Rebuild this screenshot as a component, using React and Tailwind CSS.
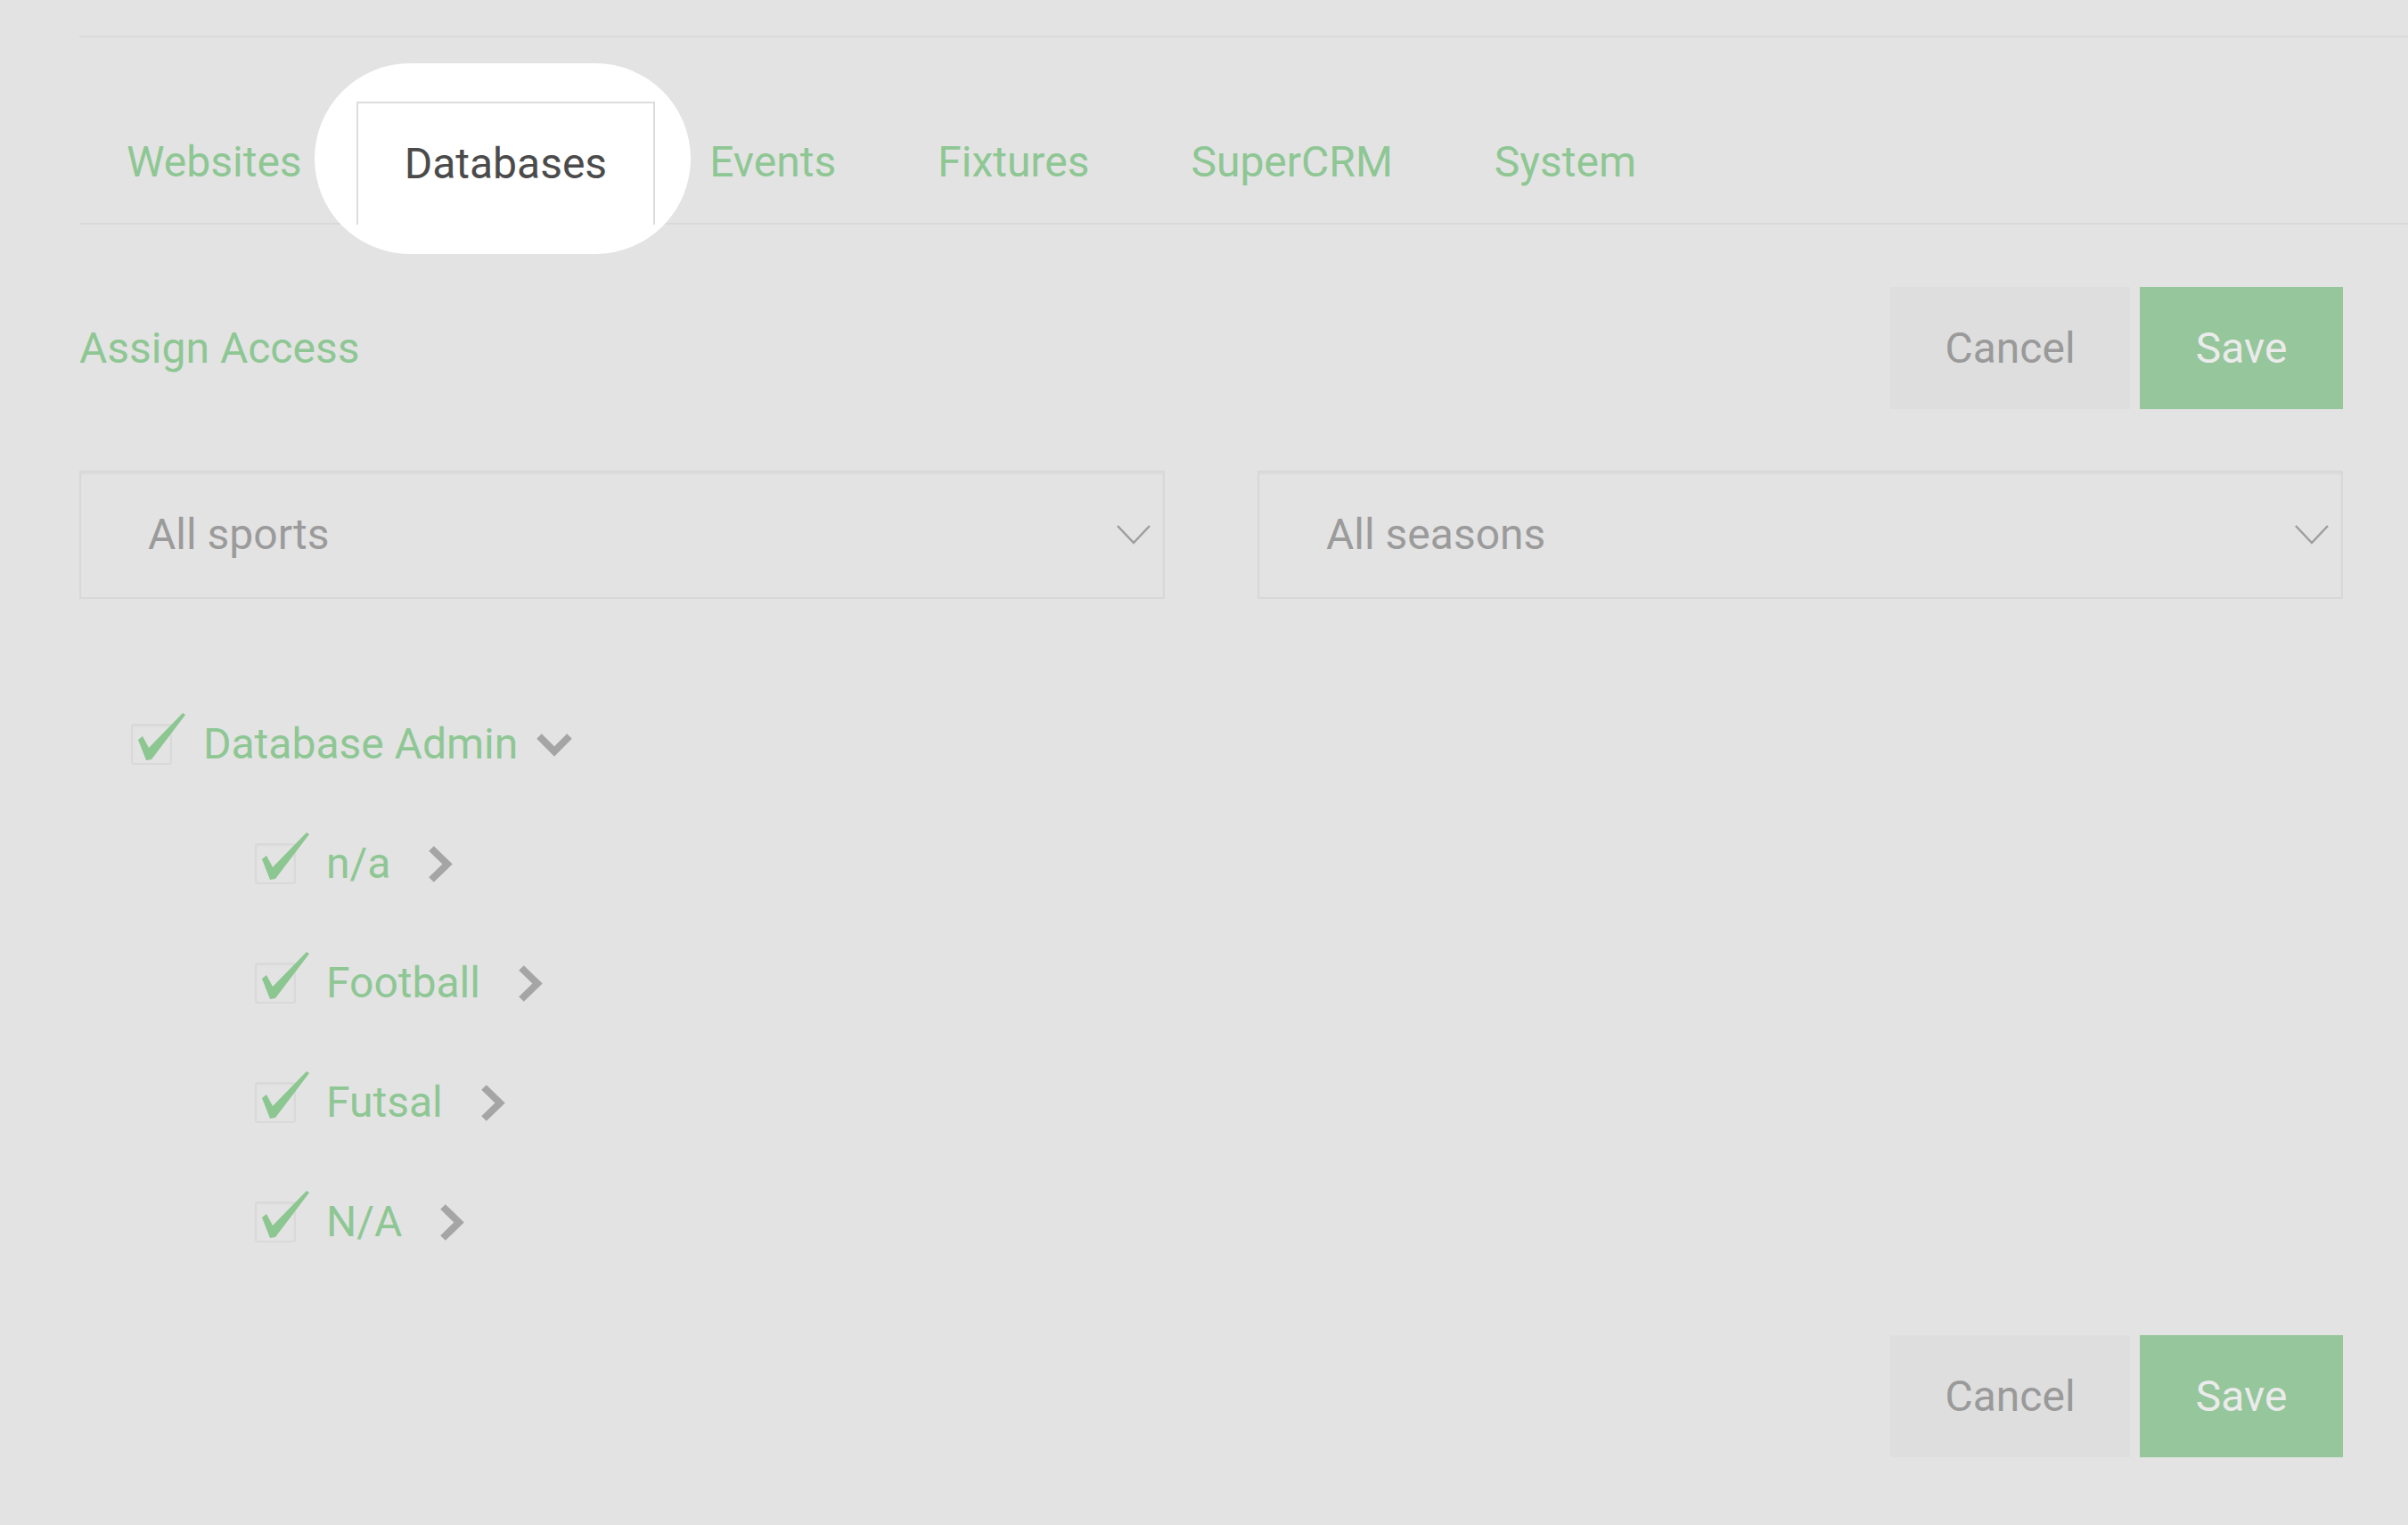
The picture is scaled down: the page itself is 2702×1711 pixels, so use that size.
import React, { useState } from 'react';

const tabs = ['Websites', 'Databases', 'Events', 'Fixtures', 'SuperCRM', 'System'];
const sports = ['n/a', 'Football', 'Futsal', 'N/A'];

const CheckBox = () => (
  <div className="relative w-[46px] h-[46px] shrink-0 border-2 border-[#d9d9d9] rounded-[3px] shadow-[inset_0_1px_2px_rgba(0,0,0,0.04)]">
    <svg className="absolute left-[4px] top-[-15px]" width="56" height="56" viewBox="0 0 56 56">
      <path d="M2 31 L7 27 L14 40 L52 1 L55 3 L17 53 L11 54 Z" fill="#8cc690" />
    </svg>
  </div>
);

const ChevronDown = () => (
  <svg width="42" height="28" viewBox="0 0 42 28">
    <polyline points="4,5 21,22 38,5" fill="none" stroke="#a5a5a5" strokeWidth="8" />
  </svg>
);

const ChevronRight = () => (
  <svg width="29" height="43" viewBox="0 0 29 43">
    <polyline points="5,4 23,21.5 5,39" fill="none" stroke="#a5a5a5" strokeWidth="8" />
  </svg>
);

const SelectBox = ({ label }) => (
  <div className="h-[144px] flex items-center justify-between border-2 border-[#d8d8d8] shadow-[inset_0_2px_2px_rgba(0,0,0,0.04)] pl-[75px] pr-[14px]">
    <span className="text-[48px] text-[#9b9b9b]">{label}</span>
    <svg width="38" height="22" viewBox="0 0 38 22">
      <polyline points="1,1 19,20 37,1" fill="none" stroke="#9e9e9e" strokeWidth="2.5" />
    </svg>
  </div>
);

const Actions = ({ className }) => (
  <div className={`flex gap-[11px] ${className}`}>
    <button className="w-[269px] h-[137px] bg-[#dedede] text-[48px] text-[#9a9a9a]">Cancel</button>
    <button className="w-[228px] h-[137px] bg-[#96c69b] text-[48px] text-[#ebebeb]">Save</button>
  </div>
);

export default function App() {
  const [active, setActive] = useState('Databases');

  return (
    <div className="min-h-[1711px] bg-[#e3e3e3] font-[family-name:Roboto,sans-serif] pl-[89px] pt-[40px]">
      <div className="border-t-2 border-[#dadada]">
        {/* tab strip */}
        <div className="relative mt-[72px] flex gap-[8px] border-b-2 border-[#d9d9d9]">
          <div className="absolute left-[264px] top-[-43px] w-[422px] h-[214px] rounded-full bg-white" />
          {tabs.map((t) =>
            t === active ? (
              <div
                key={t}
                className="relative z-10 h-[138px] -mb-[2px] px-[52px] flex items-center bg-white border-2 border-b-0 border-[#dcdcdc] text-[48px] text-[#4b4b4b]"
              >
                {t}
              </div>
            ) : (
              <button
                key={t}
                onClick={() => setActive(t)}
                className="relative z-10 h-[136px] px-[53px] flex items-center text-[48px] text-[#8ec794]"
              >
                {t}
              </button>
            )
          )}
        </div>

        <div className="pr-[73px]">
          <div className="mt-[70px] flex items-center justify-between">
            <h3 className="text-[48px] text-[#8ec794] leading-none">Assign Access</h3>
            <Actions />
          </div>

          <div className="mt-[69px] grid grid-cols-2 gap-[104px]">
            <SelectBox label="All sports" />
            <SelectBox label="All seasons" />
          </div>

          {/* access tree */}
          <div className="mt-[96px] pl-[58px]">
            <div className="h-[134px] flex items-center">
              <CheckBox />
              <span className="ml-[35px] mr-[20px] text-[48px] leading-none text-[#8ec794]">Database Admin</span>
              <ChevronDown />
            </div>
            {sports.map((s) => (
              <div key={s} className="h-[134px] flex items-center pl-[139px]">
                <CheckBox />
                <span className="ml-[34px] mr-[41px] text-[48px] leading-none text-[#8ec794]">{s}</span>
                <ChevronRight />
              </div>
            ))}
          </div>

          <Actions className="mt-[60px] justify-end" />
        </div>
      </div>
    </div>
  );
}
